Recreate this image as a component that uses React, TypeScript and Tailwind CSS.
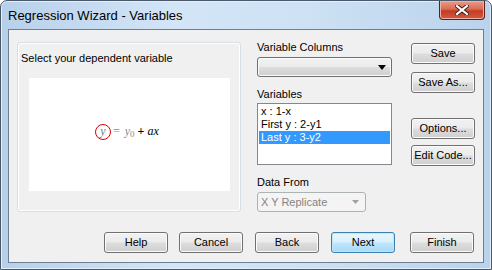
import React from "react";

const btn =
  "flex h-[21px] w-[64px] items-center justify-center rounded-[3px] border border-[#707070] bg-[linear-gradient(to_bottom,#f2f2f2_0%,#ebebeb_48%,#dddddd_52%,#cfcfcf_100%)] text-[11px] leading-none text-black shadow-[inset_0_0_0_1px_#fbfbfb]";

const btnDefault =
  "flex h-[21px] w-[64px] items-center justify-center rounded-[3px] border border-[#3c7fb1] bg-[linear-gradient(to_bottom,#eaf6fd_0%,#d9f0fc_48%,#bee6fd_52%,#a7d9f5_100%)] text-[11px] leading-none text-black shadow-[inset_0_0_0_1px_#c4e5f6]";

function Btn({ label, def, className = "" }: { label: string; def?: boolean; className?: string }) {
  return (
    <button type="button" className={`${def ? btnDefault : btn} ${className}`}>
      {label}
    </button>
  );
}

const CloseIcon = () => (
  <svg width="14" height="10" viewBox="0 0 14 10">
    <path d="M2 1l10 8M12 1L2 9" stroke="#3b1a14" strokeWidth="4" strokeLinecap="square" />
    <path d="M2 1l10 8M12 1L2 9" stroke="#ffffff" strokeWidth="2.2" strokeLinecap="square" />
  </svg>
);

export default function App() {
  return (
    <div className="h-[270px] w-[492px] overflow-hidden bg-white font-['Liberation_Sans',Arial,sans-serif]">
      <div className="flex h-full w-full flex-col rounded-t-[7px] border border-[#4a5a6c] bg-[linear-gradient(to_right,#b7d0ea_0%,#d3e5f7_35%,#cfe2f5_60%,#bad3ec_100%)] shadow-[inset_0_0_0_1px_#e4eef9]">
        {/* Title bar */}
        <div className="flex h-[28px] items-start">
          <span className="ml-[7px] mt-[6px] text-[13px] leading-[18px] text-black">Regression Wizard - Variables</span>
          <div className="ml-auto mr-[6px] flex h-[19px] w-[46px] items-center justify-center rounded-b-[4px] border border-t-0 border-[#5e2015] bg-[linear-gradient(to_bottom,#e99d8a_0%,#d86c52_45%,#c43c22_55%,#d35a3f_100%)] shadow-[inset_0_0_0_1px_#eab3a4]">
            <CloseIcon />
          </div>
        </div>

        {/* Client area */}
        <div className="mx-[7px] mb-[6px] flex flex-1 flex-col border border-[#6e7f91] bg-[#f0f0f0] text-[11px] leading-[13px] text-black">
          <div className="flex h-[182px] items-start">
            {/* Group box */}
            <div className="ml-[8px] mt-[12px] h-[170px] w-[224px] rounded-[3px] border border-[#d5dfe5] shadow-[inset_0_0_0_1px_#ffffff]">
              <div className="ml-[3px] mt-[9px]">Select your dependent variable</div>
              <div className="ml-[11px] mt-[13px] flex h-[113px] w-[201px] items-center bg-white pb-[6px] pl-[66px] font-['Liberation_Serif',serif] text-[12px]">
                <span className="flex h-[16px] w-[16px] items-center justify-center rounded-full border border-[#e00000] italic text-[#7a7a7a]">
                  y
                </span>
                <span className="ml-[2px] text-[#8a8a8a]">=</span>
                <span className="ml-[5px] italic text-[#8a8a8a]">
                  y<sub className="text-[9px] not-italic">0</sub>
                </span>
                <span className="ml-[3px] font-bold text-black">+</span>
                <span className="ml-[3px] italic text-black">ax</span>
              </div>
            </div>

            {/* Right column */}
            <div className="ml-[16px] mt-[11px] flex w-[135px] flex-col">
              <div>Variable Columns</div>
              <div className="mt-[3px] flex h-[20px] items-center justify-end rounded-[3px] border border-[#707070] bg-[linear-gradient(to_bottom,#f2f2f2_0%,#ebebeb_48%,#dddddd_52%,#cfcfcf_100%)] pr-[5px] shadow-[inset_0_0_0_1px_#fbfbfb]">
                <svg width="8" height="5" viewBox="0 0 8 5">
                  <path d="M0 0h8L4 5z" fill="#000" />
                </svg>
              </div>
              <div className="mt-[11px]">Variables</div>
              <div className="mt-[2px] h-[62px] border border-[#828790] bg-white pt-[1px]">
                <div className="mx-[1px] pl-[2px]">x : 1-x</div>
                <div className="mx-[1px] pl-[2px]">First y : 2-y1</div>
                <div className="mx-[1px] bg-[#3399ff] pl-[2px] text-white">Last y : 3-y2</div>
              </div>
              <div className="mt-[11px]">Data From</div>
              <div className="mt-[3px] flex h-[20px] w-[109px] items-center justify-between rounded-[3px] border border-[#adb2b5] bg-[#f4f4f4] pl-[3px] pr-[6px] text-[#838383]">
                <span>X Y Replicate</span>
                <svg width="7" height="4" viewBox="0 0 7 4">
                  <path d="M0 0h7L3.5 4z" fill="#a0a0a0" />
                </svg>
              </div>
            </div>

            {/* Side buttons */}
            <div className="ml-[19px] mt-[13px] flex flex-col">
              <Btn label="Save" />
              <Btn label="Save As..." className="mt-[8px]" />
              <Btn label="Options..." className="mt-[25px]" />
              <Btn label="Edit Code..." className="mt-[6px]" />
            </div>
          </div>

          {/* Bottom buttons */}
          <div className="mt-[20px] flex">
            <Btn label="Help" className="ml-[95px]" />
            <Btn label="Cancel" className="ml-[11px]" />
            <Btn label="Back" className="ml-[12px]" />
            <Btn label="Next" def className="ml-[12px]" />
            <Btn label="Finish" className="ml-[15px]" />
          </div>
        </div>
      </div>
    </div>
  );
}
